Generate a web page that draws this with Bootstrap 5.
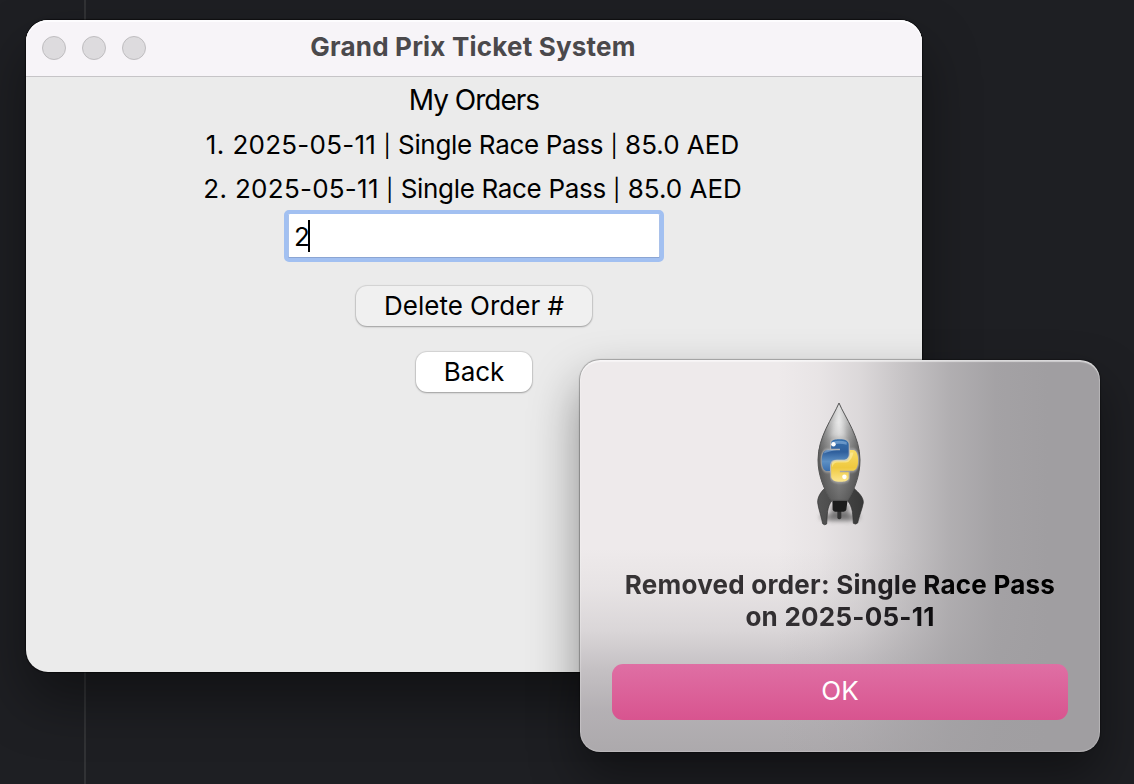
<!DOCTYPE html>
<html lang="en">
<head>
<meta charset="utf-8">
<title>Grand Prix Ticket System</title>
<link href="https://cdn.jsdelivr.net/npm/bootstrap@5.3.0/dist/css/bootstrap.min.css" rel="stylesheet">
<style>
body{font-family:Inter,"Liberation Sans",sans-serif;background:#1e1f22;height:784px;font-size:26px;color:#000}
.desk{width:1134px;height:784px;background:#1e1f23}
.guide{left:84px;width:2px;background:#313235}
.app-win{left:26px;top:20px;width:896px;height:652px;border-radius:22px;background:#ebebeb;box-shadow:0 0 1px 1px rgba(0,0,0,.5),0 28px 56px rgba(0,0,0,.42)}
.title-bar{height:57px;padding:0 16px;background:#f7f4f8;border-bottom:1px solid #c6c4c7;border-radius:22px 22px 0 0;box-shadow:inset 0 2px 0 #fdfcfe}
.dot{width:24px;height:24px;border-radius:50%;background:#dddbde;border:1px solid #bfbdc0}
.win-title{font-size:26px;font-weight:700;letter-spacing:.2px;color:#4b494c;line-height:32px;left:0;right:2px;top:11px}
.line{line-height:44px;height:44px;white-space:nowrap;padding-right:3px}
.heading-line{font-size:28px;letter-spacing:-1px;height:46px;line-height:47px;padding-right:0}
.num{letter-spacing:.4px}
.date{letter-spacing:.25px}
.pass{letter-spacing:-.32px}
.bar{font-size:22px}
.entry{width:380px;height:52px;margin-top:-1px;border:4px solid #a2c0f1;border-radius:5px;background:#fff;box-shadow:inset 0 -1px 0 #8ba5d3,inset 1px 0 0 #a9c1ea,inset -1px 0 0 #a9c1ea;padding:0 6px}
.entry span{line-height:44px;padding-top:2px}
.caret{width:2px;height:32px;background:#000;margin-left:-2px}
.mac-btn{font-size:26px;line-height:38px;height:40px;border:0;border-radius:11px;padding:0;color:#000;background:#fff;box-shadow:0 0 1px 1px rgba(0,0,0,.1),0 1px 2px rgba(0,0,0,.25)}
.btn-del{width:236px;background:#f0f0f0;margin-top:24px}
.btn-back{width:116px;margin-top:26px}
.alert-win{left:580px;top:360px;width:520px;height:392px;border-radius:20px;padding:40px 32px 32px;
background:linear-gradient(to right,rgba(160,158,161,0) 38%,rgba(160,158,161,.08) 46%,rgba(160,158,161,.24) 54%,rgba(160,158,161,.5) 62%,rgba(160,158,161,.78) 71%,rgba(160,158,161,.95) 80%,#a09ea1 90%),
linear-gradient(to bottom,rgba(172,168,172,0) 48%,rgba(172,168,172,.1) 58%,rgba(172,168,172,.3) 69%,rgba(172,168,172,.63) 79%,rgba(172,168,172,.87) 89%,#aca9ac 100%),#eeeaeb;
box-shadow:inset 0 2px 1px rgba(255,255,255,.5),inset 0 0 1px 1px rgba(255,255,255,.2),0 0 1px 1px rgba(0,0,0,.28),0 24px 50px rgba(0,0,0,.42)}
.rocket{width:52px;height:128px}
.msg{font-weight:700;letter-spacing:.24px;line-height:32px;margin-top:41px;height:64px;white-space:nowrap}
.msg-ink{background:linear-gradient(to right,#383536 0,#302d30 48%,#1b191c 64%,#000 76%);-webkit-background-clip:text;background-clip:text;color:transparent}
.ok-btn,.ok-btn:hover{height:56px;margin-top:31px;border:0;border-radius:11px;background:linear-gradient(#df6fa4,#d8548f);color:#fff;font-size:26px;line-height:50px;padding:0 0 2px}
</style>
</head>
<body class="m-0 overflow-hidden">
<main class="desk position-relative overflow-hidden">
  <div class="guide position-absolute top-0 bottom-0"></div>

  <section class="app-win position-absolute d-flex flex-column">
    <header class="title-bar position-relative d-flex align-items-center gap-3">
      <span class="dot"></span><span class="dot"></span><span class="dot"></span>
      <div class="win-title position-absolute text-center">Grand Prix Ticket System</div>
    </header>
    <div class="d-flex flex-column align-items-center">
      <div class="line heading-line">My Orders</div>
      <div class="line"><span class="num">1. </span><span class="date">2025-05-11</span> <span class="bar">|</span> <span class="pass">Single Race Pass</span> <span class="bar">|</span> 85.0 AED</div>
      <div class="line"><span class="num">2. </span><span class="date">2025-05-11</span> <span class="bar">|</span> <span class="pass">Single Race Pass</span> <span class="bar">|</span> 85.0 AED</div>
      <div class="entry d-flex align-items-center"><span>2</span><i class="caret"></i></div>
      <button class="btn mac-btn btn-del">Delete Order #</button>
      <button class="btn mac-btn btn-back">Back</button>
    </div>
  </section>

  <section class="alert-win position-absolute d-flex flex-column">
    <svg class="rocket align-self-center flex-shrink-0" viewBox="72 30 156 384">
      <defs>
        <linearGradient id="hull" x1="0" x2="1"><stop offset="0" stop-color="#6c6c6c"/><stop offset=".25" stop-color="#acacac"/><stop offset=".5" stop-color="#dedede"/><stop offset=".62" stop-color="#cacaca"/><stop offset="1" stop-color="#6a6a6a"/></linearGradient>
        <linearGradient id="shade" x1="0" x2="0" y1="0" y2="1"><stop offset=".2" stop-color="#444" stop-opacity="0"/><stop offset=".6" stop-color="#444" stop-opacity=".5"/><stop offset="1" stop-color="#3a3a3a" stop-opacity=".72"/></linearGradient>
        <linearGradient id="fin"><stop offset="0" stop-color="#555"/><stop offset="1" stop-color="#383838"/></linearGradient>
        <linearGradient id="blue" x1="0" x2="0" y1="0" y2="1"><stop offset="0" stop-color="#3570ad"/><stop offset=".4" stop-color="#2f5f9c"/><stop offset=".7" stop-color="#5d90c4"/><stop offset="1" stop-color="#3a6fae"/></linearGradient>
        <linearGradient id="gold" x1="0" x2="0" y1="0" y2="1"><stop offset="0" stop-color="#fbe690"/><stop offset=".45" stop-color="#efc93f"/><stop offset="1" stop-color="#f8dc68"/></linearGradient>
        <filter id="soft" x="-30%" y="-60%" width="160%" height="220%"><feGaussianBlur stdDeviation="6"/></filter>
        <filter id="glow" x="-20%" y="-20%" width="140%" height="140%"><feGaussianBlur stdDeviation=".45"/></filter>
        <path id="snake" d="M14.25.18l.9.2.73.26.59.3.45.32.34.34.25.34.16.33.1.3.04.26.02.2-.01.13V8.5l-.05.63-.13.55-.21.46-.26.38-.3.31-.33.25-.35.19-.35.14-.33.1-.3.07-.26.04-.21.02H8.77l-.69.05-.59.14-.5.22-.41.27-.33.32-.27.35-.2.36-.15.37-.1.35-.07.32-.04.27-.02.21v3.06H3.17l-.21-.03-.28-.07-.32-.12-.35-.18-.36-.26-.36-.36-.35-.46-.32-.59-.28-.73-.21-.88-.14-1.05-.05-1.23.06-1.22.16-1.04.24-.87.32-.71.36-.57.4-.44.42-.33.42-.24.4-.16.36-.1.32-.05.24-.01h.16l.06.01h8.16v-.83H6.18l-.01-2.75-.02-.37.05-.34.11-.31.17-.28.25-.26.31-.23.38-.2.44-.18.51-.15.58-.12.64-.1.71-.06.77-.04.84-.02 1.27.05z"/>
      </defs>
      <ellipse cx="150" cy="382" rx="62" ry="12" fill="#555" opacity=".6" filter="url(#soft)"/>
      <path d="M122 345h56v38h-56z" fill="#444" opacity=".5" filter="url(#soft)"/>
      <path d="M142 360h12v24q-6 8-12 0z" fill="#333"/>
      <path d="M127 330h46l-4 28q-1 7-8 7h-26q-6 0-7-7z" fill="#1c1c1c"/>
      <path d="M105 294C92 306 82 322 83 338C86 360 94 378 98 401q6 6 12 1C112 380 110 350 126 332L112 294zM191 294C206 308 221 322 220 338C216 360 207 378 203 399q-6 6-13 1C188 380 190 350 172 332L184 294z" fill="url(#fin)" stroke="#303030" stroke-width="2"/>
      <path d="M147 39C128 84 84 140 84 210C84 258 104 302 123 331H173C192 302 210 258 210 210C210 140 166 84 147 39z" fill="url(#hull)"/>
      <path d="M147 39C128 84 84 140 84 210C84 258 104 302 123 331H173C192 302 210 258 210 210C210 140 166 84 147 39z" fill="url(#shade)" stroke="#555" stroke-width="3"/>
      <path d="M146 60Q128 105 120 142H168Q158 100 146 60z" fill="#fff" opacity=".35" filter="url(#soft)"/>
      <g transform="translate(95.500 147.500) scale(4.520 5.330)">
        <g fill="none" stroke="#c9c9c9" stroke-opacity=".55" stroke-width="1.6" filter="url(#glow)"><use href="#snake"/><use href="#snake" transform="rotate(180 12 12)"/></g>
        <use href="#snake" fill="url(#blue)"/>
        <use href="#snake" fill="url(#gold)" transform="rotate(180 12 12)"/>
        <path d="M7 1.400Q12 .3 16.500 1.600V3.200Q12 2 7 3zM1.200 8Q2.500 5.700 5 5.900H11Q4.500 6.800 1.200 8z" fill="#a8cdf0" opacity=".45"/>
        <path d="M6.500 13Q7.500 11.800 10 11.600H15Q18 11 19 7.500H21Q20 12.500 16 13.200H10Q7.500 13.500 7 16z" fill="#fff5b8" opacity=".5"/>
        <ellipse cx="7.700" cy="2.900" rx="1.500" ry="1.250" fill="#fff"/><ellipse cx="15" cy="21.200" rx="1.500" ry="1.300" fill="#fff"/>
      </g>
    </svg>
    <div class="msg text-center"><div class="msg-ink">Removed order: Single Race Pass<br>on 2025-05-11</div></div>
    <button class="btn ok-btn w-100">OK</button>
  </section>
</main>
<script src="https://cdn.jsdelivr.net/npm/bootstrap@5.3.0/dist/js/bootstrap.bundle.min.js"></script>
</body>
</html>
